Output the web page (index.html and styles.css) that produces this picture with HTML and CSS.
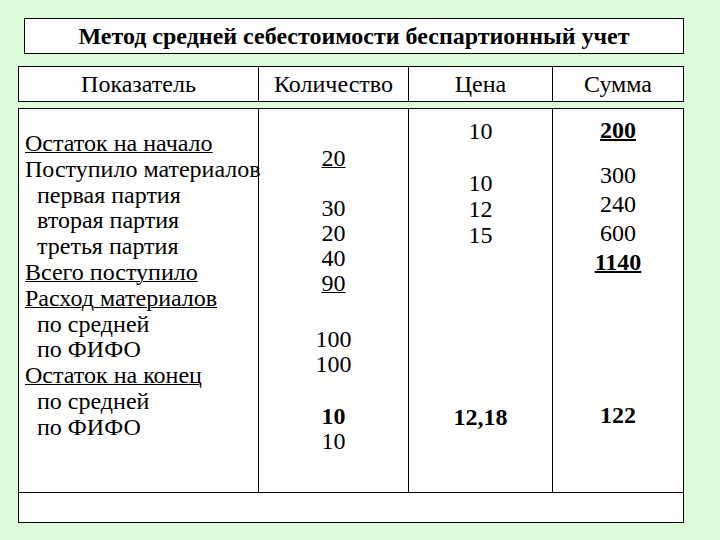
FILE: index.html
```html
<!DOCTYPE html>
<html>
<head>
<meta charset="utf-8">
<title>Метод средней себестоимости</title>
<link rel="stylesheet" href="styles.css">
</head>
<body>
<div class="page">
  <div class="title">Метод средней себестоимости беспартионный учет</div>
  <div class="head">
    <div class="hcell">Показатель</div>
    <div class="hcell">Количество</div>
    <div class="hcell">Цена</div>
    <div class="hcell">Сумма</div>
  </div>
  <div class="table">
    <div class="cols">
      <div class="col c1">
        <div class="ln u">Остаток на начало</div>
        <div class="ln">Поступило материалов</div>
        <div class="ln ind">первая партия</div>
        <div class="ln ind">вторая партия</div>
        <div class="ln ind">третья партия</div>
        <div class="ln u">Всего поступило</div>
        <div class="ln u">Расход материалов</div>
        <div class="ln ind">по средней</div>
        <div class="ln ind">по ФИФО</div>
        <div class="ln u">Остаток на конец</div>
        <div class="ln ind">по средней</div>
        <div class="ln ind">по ФИФО</div>
      </div>
      <div class="col c2">
        <div class="ln"><span class="u">20</span></div>
        <div class="ln g0">30</div>
        <div class="ln">20</div>
        <div class="ln">40</div>
        <div class="ln"><span class="u">90</span></div>
        <div class="ln g2">100</div>
        <div class="ln">100</div>
        <div class="ln g1 b">10</div>
        <div class="ln">10</div>
      </div>
      <div class="col c3">
        <div class="ln">10</div>
        <div class="ln g3">10</div>
        <div class="ln">12</div>
        <div class="ln">15</div>
        <div class="ln g4 b">12,18</div>
      </div>
      <div class="col c4">
        <div class="ln"><span class="b u">200</span></div>
        <div class="ln g5">300</div>
        <div class="ln">240</div>
        <div class="ln">600</div>
        <div class="ln"><span class="b u">1140</span></div>
        <div class="ln g6 b">122</div>
      </div>
    </div>
    <div class="foot"></div>
  </div>
</div>
</body>
</html>
```

FILE: styles.css
```css
* { box-sizing: border-box; }
html, body { margin: 0; padding: 0; }
body {
  background: #dcfbd9;
  color: #000;
  width: 720px;
  height: 540px;
  overflow: hidden;
}
.page {
  padding: 18px 0 0 18px;
  font-family: "Liberation Serif", "Times New Roman", serif;
}
.title {
  margin-left: 6px;
  width: 660px;
  height: 36px;
  border: 1px solid #000;
  background: #fff;
  font-weight: bold;
  font-size: 24px;
  line-height: 34px;
  text-align: center;
  white-space: nowrap;
}
.head, .cols {
  display: grid;
  grid-template-columns: 240px 150px 144px 1fr;
}
.head {
  margin-top: 12px;
  width: 666px;
  height: 36px;
  border: 1px solid #000;
  background: #fff;
}
.hcell {
  border-right: 1px solid #000;
  font-size: 24px;
  line-height: 34px;
  text-align: center;
}
.hcell:last-child { border-right: 0; }
.table {
  margin-top: 6px;
  width: 666px;
  border: 1px solid #000;
  background: #fff;
}
.cols {
  height: 384px;
  border-bottom: 1px solid #000;
}
.col {
  border-right: 1px solid #000;
  font-size: 24px;
  text-align: center;
  white-space: nowrap;
}
.col:last-child { border-right: 0; }
.c1 {
  text-align: left;
  padding: 22px 0 0 6px;
  line-height: 25.8px;
}
.c1 .ind { padding-left: 12px; }
.c2 { padding-top: 37px; line-height: 25px; }
.c3 { padding-top: 9px; line-height: 26px; }
.c4 { padding-top: 7px; line-height: 29px; }
.g0 { margin-top: 25px; }
.g1 { margin-top: 27px; }
.g2 { margin-top: 31px; }
.g3 { margin-top: 26px; }
.g4 { margin-top: 156px; }
.g5 { margin-top: 16px; }
.g6 { margin-top: 124px; }
.u { text-decoration: underline; text-decoration-thickness: 1px; }
.b { font-weight: bold; }
.b.u { text-decoration-thickness: 2px; }
.foot { height: 29px; }
```
